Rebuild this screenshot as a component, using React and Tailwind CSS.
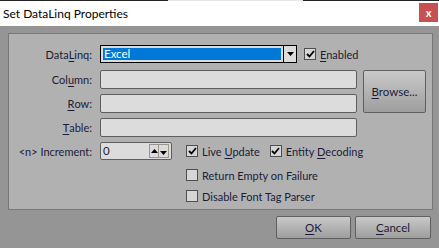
import React from 'react';

const font = { fontFamily: 'Lato, "Noto Sans", sans-serif' };

function U({ children }) {
  return <span className="underline underline-offset-[2px] decoration-[1px]">{children}</span>;
}

function Check({ checked }) {
  return (
    <span className="w-[12px] h-[12px] border border-[#4f4f4f] bg-[#d6d6d6] flex items-center justify-center flex-shrink-0">
      {checked && (
        <svg width="9" height="8" viewBox="0 0 9 8">
          <path d="M1 4 L3.5 6.5 L8 1" stroke="#000" strokeWidth="1.8" fill="none" />
        </svg>
      )}
    </span>
  );
}

function CheckRow({ checked, children, className = '' }) {
  return (
    <label className={`flex items-center gap-[4px] text-[11px] text-[#1c1c38] leading-none whitespace-nowrap ${className}`}>
      <Check checked={checked} />
      <span>{children}</span>
    </label>
  );
}

function Field() {
  return <div className="h-[19px] bg-[#dcdcdc] border border-[#5e5e5e] rounded-[2px]" />;
}

function Label({ children }) {
  return (
    <div className="h-full flex items-center justify-end pr-[8px] text-[11px] text-[#1c1c38] leading-none whitespace-nowrap">
      {children}
    </div>
  );
}

function Button({ children, className = '' }) {
  return (
    <button className={`flex items-center justify-center border border-[#5f5f5f] rounded-[2px] bg-gradient-to-b from-[#c9c9c9] to-[#9e9e9e] text-[11.5px] text-[#1c1c38] ${className}`}>
      {children}
    </button>
  );
}

export default function App() {
  return (
    <div className="w-[439px] h-[248px] bg-[#959595] flex flex-col overflow-hidden" style={font}>
      {/* window frame top edge */}
      <div className="flex h-px">
        <div className="w-[168px] bg-[#222]" />
        <div className="w-[135px] bg-[#e8e8e8]" />
        <div className="flex-1 bg-[#222]" />
      </div>

      {/* Title bar */}
      <div className="h-[25px] bg-white flex items-start justify-between pl-[3px] pr-[1px]">
        <span className="text-[12px] text-black mt-[4px]">Set DataLinq Properties</span>
        <div className="w-[19px] h-[19px] mt-[2px] bg-[#c75050] flex items-center justify-center text-white text-[11px] font-bold leading-none">
          x
        </div>
      </div>

      {/* Group panel */}
      <div className="mt-[7px] ml-[8px] w-[425px] h-[177px] bg-[#b1b1b1] border border-[#777] flex flex-col">
        <div className="grid grid-cols-[91px_auto] mt-[11px]">
          <Label>Data<U>L</U>inq:</Label>
          <div className="flex items-center">
            <div className="w-[197px] h-[18px] bg-[#dcdcdc] border border-black flex">
              <div className="flex-1 m-[2px] bg-[#0078d7] text-white text-[11.5px] leading-none flex items-center px-[1px]">
                Excel
              </div>
              <div className="w-[13px] border-l border-black flex items-center justify-center">
                <svg width="7" height="4" viewBox="0 0 7 4"><path d="M0 0 H7 L3.5 4 Z" fill="#000" /></svg>
              </div>
            </div>
            <CheckRow checked className="ml-[7px]"><U>E</U>nabled</CheckRow>
          </div>
        </div>

        <div className="grid grid-cols-[91px_257px_69px] grid-rows-[19px_19px_19px] gap-y-[5px] mt-[7px]">
          <Label>Col<U>u</U>mn:</Label>
          <Field />
          <div className="row-span-2 pl-[6px]">
            <Button className="w-[63px] h-[43px]"><span><U>B</U>rowse...</span></Button>
          </div>
          <Label><U>R</U>ow:</Label>
          <Field />
          <Label><U>T</U>able:</Label>
          <Field />
          <div />
        </div>

        <div className="grid grid-cols-[91px_auto] mt-[5px]">
          <div className="h-[18px]">
            <Label>&lt;n&gt; Increment:</Label>
          </div>
          <div className="flex flex-col">
            <div className="flex items-center h-[18px]">
              <div className="w-[72px] h-[18px] bg-[#dcdcdc] border border-[#5e5e5e] rounded-[2px] flex items-center text-[11.5px] text-[#1c1c38] leading-none pl-[2px]">
                <span className="flex-1">0</span>
                <div className="flex h-[14px] mr-[2px] border border-[#9b968a]">
                  <div className="w-[9px] flex items-center justify-center border-r border-[#9b968a]">
                    <svg width="7" height="4" viewBox="0 0 7 4"><path d="M0 4 H7 L3.5 0 Z" fill="#000" /></svg>
                  </div>
                  <div className="w-[9px] flex items-center justify-center pt-[3px]">
                    <svg width="7" height="4" viewBox="0 0 7 4"><path d="M0 0 H7 L3.5 4 Z" fill="#000" /></svg>
                  </div>
                </div>
              </div>
              <CheckRow checked className="ml-[14px]">Live <U>U</U>pdate</CheckRow>
              <CheckRow checked className="ml-[10px]">Entity <U>D</U>ecoding</CheckRow>
            </div>
            <CheckRow className="ml-[86px] mt-[9px]">Return Empty on Failure</CheckRow>
            <CheckRow className="ml-[86px] mt-[9px]">Disable Font Tag Parser</CheckRow>
          </div>
        </div>
      </div>

      {/* Buttons */}
      <div className="flex justify-end gap-[4px] pr-[8px] mt-[6px]">
        <Button className="w-[75px] h-[23px]"><U>O</U>K</Button>
        <Button className="w-[76px] h-[23px]"><U>C</U>ancel</Button>
      </div>
    </div>
  );
}
